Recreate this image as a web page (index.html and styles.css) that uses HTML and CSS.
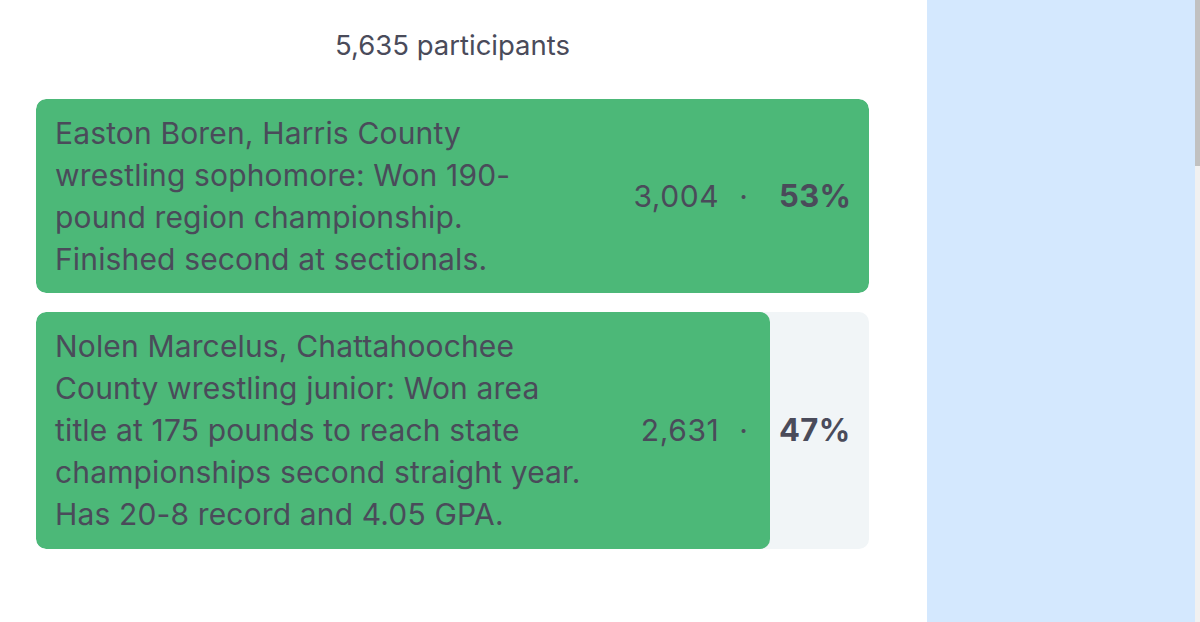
FILE: index.html
```html
<!DOCTYPE html>
<html lang="en">
<head>
    <meta charset="UTF-8">
    <title>Wrestler of the Week Poll</title>
    <link rel="stylesheet" href="styles.css">
</head>
<body>
    <div class="page">
        <main class="poll">
            <div class="poll-count">5,635 participants</div>

            <div class="answers">
                <div class="answer">
                    <div class="answer-bar" style="width: 100%"></div>
                    <div class="answer-text">Easton Boren, Harris County wrestling sophomore: Won 190-pound region championship. Finished second at sectionals.</div>
                    <div class="answer-stats">
                        <span class="votes">3,004</span>
                        <span class="dot">&middot;</span>
                        <span class="pct">53%</span>
                    </div>
                </div>
                <div class="answer">
                    <div class="answer-bar" style="width: 88.1%"></div>
                    <div class="answer-text">Nolen Marcelus, Chattahoochee County wrestling junior: Won area title at 175 pounds to reach state championships second straight year. Has 20-8 record and 4.05 GPA.</div>
                    <div class="answer-stats">
                        <span class="votes">2,631</span>
                        <span class="dot">&middot;</span>
                        <span class="pct">47%</span>
                    </div>
                </div>
            </div>
        </main>

        <aside class="sidebar">
            <div class="sidebar-body"></div>
            <div class="scroll-track"><div class="scroll-thumb"></div></div>
        </aside>
    </div>
</body>
</html>
```

FILE: styles.css
```css
* { box-sizing: border-box; margin: 0; padding: 0; }
body {
    font-family: 'Inter', 'Noto Sans', sans-serif;
    background-color: #FFFFFF;
    color: #4a4b5a;
    overflow: hidden;
}
.page {
    display: grid;
    grid-template-columns: 927px 1fr;
    height: 100vh;
}
.poll {
    padding: 30px 58px 0 36px;
}
.poll-count {
    font-size: 27.5px;
    line-height: 30px;
    text-align: center;
}
.answers {
    margin-top: 39px;
    display: flex;
    flex-direction: column;
    gap: 19px;
}
.answer {
    position: relative;
    display: flex;
    align-items: center;
    padding: 13px 19px;
    background-color: #f1f5f7;
    border-radius: 10px;
    overflow: hidden;
}
.answer + .answer { padding-bottom: 14px; }
.answer-bar {
    position: absolute;
    top: 0; left: 0; bottom: 0;
    background-color: #4cb878;
    border-radius: 10px;
}
.answer-text, .answer-stats { position: relative; }
.answer-text {
    width: 536px;
    font-size: 30px;
    line-height: 42px;
    letter-spacing: 0.15px;
}
.answer-stats {
    margin-left: auto;
    display: flex;
    align-items: center;
    font-size: 30px;
    line-height: 42px;
}
.votes { letter-spacing: 0.6px; }
.dot { margin: 0 31px 0 20px; }
.pct {
    font-weight: 700;
    font-size: 31px;
    width: 71px;
    text-align: right;
    letter-spacing: 0.4px;
}
.sidebar {
    display: grid;
    grid-template-columns: 1fr 5px;
    background-color: #d4e8fe;
}
.scroll-track { background-color: #f1f1f1; }
.scroll-thumb {
    height: 166px;
    background-color: #c1c1c1;
}
```
